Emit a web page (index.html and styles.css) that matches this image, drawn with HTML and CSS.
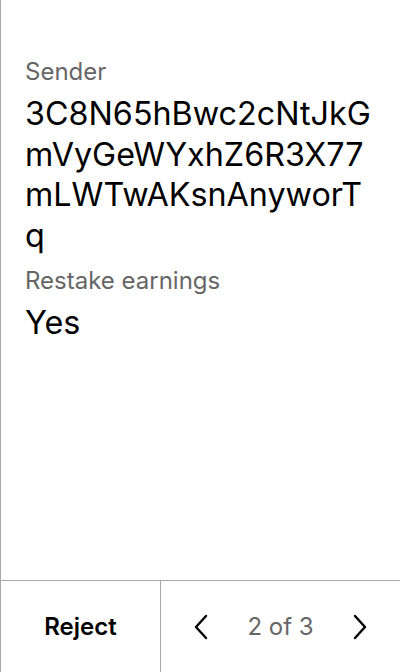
FILE: index.html
```html
<!DOCTYPE html>
<html lang="en">
<head>
<meta charset="utf-8">
<title>Review</title>
<link rel="stylesheet" href="styles.css">
</head>
<body>
<div class="screen">
  <main class="content">
    <div class="field">
      <div class="label">Sender</div>
      <div class="value">3C8N65hBwc2cNtJkGmVyGeWYxhZ6R3X77mLWTwAKsnAnyworTq</div>
    </div>
    <div class="field">
      <div class="label">Restake earnings</div>
      <div class="value">Yes</div>
    </div>
  </main>
  <footer class="footer">
    <div class="reject">Reject</div>
    <div class="pager">
      <svg class="chev" viewBox="0 0 16 26" width="16" height="26"><path d="M13 2 L3 13 L13 24" fill="none" stroke="#000" stroke-width="2.4" stroke-linecap="round" stroke-linejoin="round"/></svg>
      <span class="count">2 of 3</span>
      <svg class="chev" viewBox="0 0 16 26" width="16" height="26"><path d="M3 2 L13 13 L3 24" fill="none" stroke="#000" stroke-width="2.4" stroke-linecap="round" stroke-linejoin="round"/></svg>
    </div>
  </footer>
</div>
</body>
</html>
```
FILE: styles.css
```css
* { box-sizing: border-box; }
html, body { margin: 0; padding: 0; background: #fff; }
body { font-family: Inter, "Noto Sans", sans-serif; color: #000; }
.screen {
  width: 400px;
  height: 672px;
  border-left: 1px solid #a8a8a8;
  display: flex;
  flex-direction: column;
}
.content {
  flex: 1;
  padding: 56px 28px 0 24px;
}
.label {
  font-size: 24px;
  line-height: 32px;
  color: #666;
}
.value {
  font-size: 32.3px;
  line-height: 40.5px;
  word-break: break-all;
  margin-top: 6px;
}
.field + .field { margin-top: 9px; }
.footer {
  height: 92px;
  border-top: 1px solid #a8a8a8;
  display: grid;
  grid-template-columns: 160px 1fr;
}
.reject {
  border-right: 1px solid #a8a8a8;
  display: flex;
  align-items: center;
  justify-content: center;
  font-size: 24px;
  font-weight: 600;
}
.pager {
  display: flex;
  align-items: center;
  justify-content: space-between;
  padding: 0 32px;
}
.count {
  font-size: 24px;
  color: #666;
}
.chev { display: block; }
```
